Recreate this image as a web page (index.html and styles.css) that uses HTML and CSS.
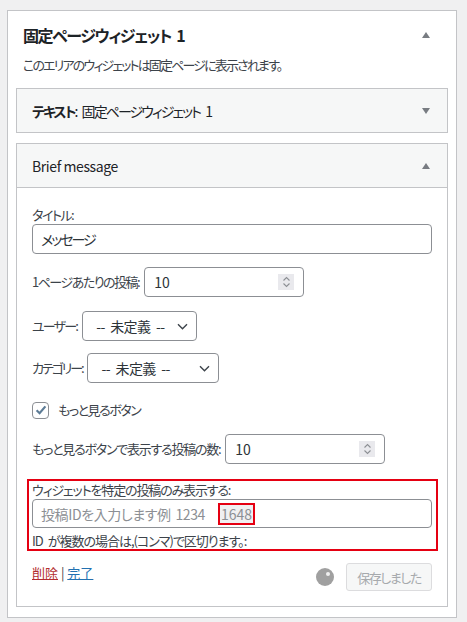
FILE: index.html
```html
<!DOCTYPE html>
<html lang="ja">
<head>
<meta charset="utf-8">
<title>固定ページウィジェット 1</title>
<link rel="stylesheet" href="styles.css">
</head>
<body>
<div class="sidebar">
  <div class="sidebar-head">
    <h2>固定ページウィジェット 1</h2>
    <span class="tri up"></span>
  </div>
  <p class="desc">このエリアのウィジェットは固定ページに表示されます。</p>

  <div class="widget">
    <div class="widget-top">
      <h3 class="jp"><b>テキスト</b>: 固定ページウィジェット 1</h3>
      <span class="tri down"></span>
    </div>
  </div>

  <div class="widget">
    <div class="widget-top">
      <h3 class="en">Brief message</h3>
      <span class="tri up"></span>
    </div>
    <div class="widget-inside">
      <div class="field-block">
        <label class="lbl" for="t">タイトル:</label>
        <input class="text-input" id="t" type="text" value="メッセージ">
      </div>

      <div class="row r-per">
        <label class="lbl" for="n1">1ページあたりの投稿:</label>
        <span class="num">
          <input id="n1" type="text" value="10">
          <span class="spin"><svg width="9" height="14" viewBox="0 0 9 14"><path d="M1.5 5.5 4.5 2.5 7.5 5.5M1.5 8.5 4.5 11.5 7.5 8.5" fill="none" stroke="#8c8f94" stroke-width="1.1"/></svg></span>
        </span>
      </div>

      <div class="row r-user">
        <label class="lbl l-user" for="u">ユーザー:</label>
        <span class="sel sel-user">
          <span class="sel-text" id="u">-- 未定義 --</span>
          <svg width="11" height="7" viewBox="0 0 11 7"><path d="M1 1.2 5.5 5.7 10 1.2" fill="none" stroke="#3c434a" stroke-width="1.4"/></svg>
        </span>
      </div>

      <div class="row r-cat">
        <label class="lbl l-cat" for="c">カテゴリー:</label>
        <span class="sel sel-cat">
          <span class="sel-text" id="c">-- 未定義 --</span>
          <svg width="11" height="7" viewBox="0 0 11 7"><path d="M1 1.2 5.5 5.7 10 1.2" fill="none" stroke="#3c434a" stroke-width="1.4"/></svg>
        </span>
      </div>

      <div class="row r-check">
        <span class="checkbox"><svg width="14" height="14" viewBox="0 0 14 14"><path d="M2.6 7.2 5.6 10.2 11.4 3.4" fill="none" stroke="#5d7c96" stroke-width="2.2"/></svg></span>
        <span class="lbl">もっと見るボタン</span>
      </div>

      <div class="row r-more">
        <label class="lbl l-more" for="n2">もっと見るボタンで表示する投稿の数:</label>
        <span class="num">
          <input id="n2" type="text" value="10">
          <span class="spin"><svg width="9" height="14" viewBox="0 0 9 14"><path d="M1.5 5.5 4.5 2.5 7.5 5.5M1.5 8.5 4.5 11.5 7.5 8.5" fill="none" stroke="#8c8f94" stroke-width="1.1"/></svg></span>
        </span>
      </div>

      <div class="highlight">
        <div class="lbl hl-label">ウィジェットを特定の投稿のみ表示する:</div>
        <div class="id-field">
          <span class="ph">投稿IDを入力します例 1234</span>
          <span class="mark">1648</span>
        </div>
        <div class="lbl hl-note">ID が複数の場合は,(コンマ)で区切ります。:</div>
      </div>

      <div class="actions">
        <div class="links"><a class="del" href="#">削除</a> | <a class="done" href="#">完了</a></div>
        <div class="save">
          <span class="spinner"></span>
          <button class="btn" disabled>保存しました</button>
        </div>
      </div>
    </div>
  </div>
</div>
</body>
</html>
```

FILE: styles.css
```css
* { box-sizing: border-box; }
body {
  margin: 0;
  background: #f0f0f1;
  font-family: "Noto Sans CJK JP", "Noto Sans", sans-serif;
  font-feature-settings: "palt";
  color: #3c434a;
  font-size: 13px;
}
.sidebar {
  margin: 10px 0 0 7px;
  width: 450px;
  background: #fff;
  border: 1px solid #c3c4c7;
  padding: 0 0 10px;
}
.sidebar-head {
  display: flex;
  justify-content: space-between;
  align-items: center;
  padding: 12px 26px 0 15px;
}
.sidebar-head h2 {
  margin: 0;
  font-size: 16px;
  line-height: 24px;
  font-weight: 700;
  color: #1d2327;
  letter-spacing: -1.4px;
  word-spacing: 3px;
}
.tri {
  width: 0;
  height: 0;
  border-left: 4px solid transparent;
  border-right: 4px solid transparent;
}
.tri.up { border-bottom: 6px solid #787c82; }
.tri.down { border-top: 6px solid #787c82; }
.desc {
  margin: 9px 15px 14px;
  line-height: 18px;
  font-size: 13px;
  color: #3c434a;
  letter-spacing: -1.85px;
}
.widget {
  margin: 0 8px 10px;
  border: 1px solid #c3c4c7;
  background: #fff;
}
.widget:last-child { margin-bottom: 0; }
.widget-top {
  height: 43px;
  background: #f6f7f7;
  display: flex;
  align-items: center;
  justify-content: space-between;
  padding: 0 17px 0 15px;
}
.widget-top h3 {
  margin: 0;
  font-size: 14px;
  font-weight: 400;
  color: #1d2327;
}
.widget-top h3.jp { letter-spacing: -1.95px; word-spacing: 4px; }
.widget-top h3.en { letter-spacing: -0.4px; }
.widget-top h3 b { font-weight: 700; }
.widget-inside {
  border-top: 1px solid #c3c4c7;
  padding: 18px 15px 15px;
}
.lbl { color: #3c434a; font-size: 13px; line-height: 18px; letter-spacing: -1.5px; }
.l-user { letter-spacing: -1.8px; }
.l-cat { letter-spacing: -2.1px; }
.l-more { letter-spacing: -1.25px; }
.field-block .lbl { display: block; }
.text-input {
  display: block;
  width: 100%;
  height: 30px;
  border: 1px solid #8c8f94;
  border-radius: 4px;
  padding: 0 8px;
  font: inherit;
  font-size: 14px;
  letter-spacing: -2px;
  color: #2c3338;
  background: #fff;
}
.row {
  display: flex;
  align-items: center;
  gap: 5px;
}
.r-per { margin-top: 13px; }
.r-user { margin-top: 14px; }
.r-cat { margin-top: 12px; }
.r-check { margin-top: 18px; gap: 9px; }
.r-more { margin-top: 15px; }
.num {
  display: flex;
  align-items: center;
  width: 160px;
  height: 30px;
  border: 1px solid #8c8f94;
  border-radius: 4px;
  padding: 0 9px 0 9px;
  background: #fff;
}
.num input {
  flex: 1;
  min-width: 0;
  border: 0;
  outline: 0;
  padding: 0;
  font: inherit;
  font-size: 14px;
  color: #2c3338;
  background: transparent;
}
.spin {
  display: flex;
  align-items: center;
  justify-content: center;
  width: 16px;
  height: 16px;
  background: #e9e9ed;
}
.sel {
  display: flex;
  align-items: center;
  justify-content: space-between;
  height: 30px;
  border: 1px solid #8c8f94;
  border-radius: 4px;
  padding: 0 8px 0 13px;
  background: #fff;
  font-size: 14px;
  color: #2c3338;
}
.sel-text { letter-spacing: -0.6px; word-spacing: 3px; }
.sel-user { width: 115px; }
.sel-cat { width: 132px; }
.checkbox {
  display: flex;
  align-items: center;
  justify-content: center;
  width: 17px;
  height: 17px;
  border: 1px solid #8c8f94;
  border-radius: 4px;
  background: #fff;
}
.highlight {
  margin: 15px -6px 0 -5px;
  border: 2px solid #e50012;
  padding: 0 4px 0 3px;
}
.hl-label { display: block; letter-spacing: -1.15px; }
.id-field {
  display: flex;
  align-items: center;
  height: 29px;
  border: 1px solid #8c8f94;
  border-radius: 4px;
  padding: 0 8px;
  font-size: 14px;
  color: #8c8f94;
}
.ph { letter-spacing: -0.4px; word-spacing: 2px; }
.mark {
  margin-left: 13px;
  border: 2px solid #e50012;
  background: #f0f0f1;
  padding: 0 1px;
  line-height: 18px;
  color: #8c8f94;
}
.hl-note { display: block; margin-top: 5px; line-height: 16px; letter-spacing: -1px; word-spacing: 3px; }
.actions {
  margin-top: 12px;
  display: flex;
  justify-content: space-between;
  align-items: flex-start;
}
.links { font-size: 13px; line-height: 20px; color: #3c434a; }
.del { color: #b32d2e; }
.done { color: #2271b1; }
.save { display: flex; align-items: center; gap: 12px; }
.spinner {
  position: relative;
  width: 18px;
  height: 18px;
  border-radius: 50%;
  background: #a0a0a0;
}
.spinner::after {
  content: "";
  position: absolute;
  left: 10px;
  top: 4px;
  width: 4px;
  height: 4px;
  border-radius: 50%;
  background: #f0f0f0;
}
.btn {
  height: 28px;
  width: 86px;
  padding: 0;
  border: 1px solid #dcdcde;
  border-radius: 3px;
  background: #f6f7f7;
  color: #a7aaad;
  font: inherit;
  font-size: 13px;
  letter-spacing: -1.5px;
}
```
